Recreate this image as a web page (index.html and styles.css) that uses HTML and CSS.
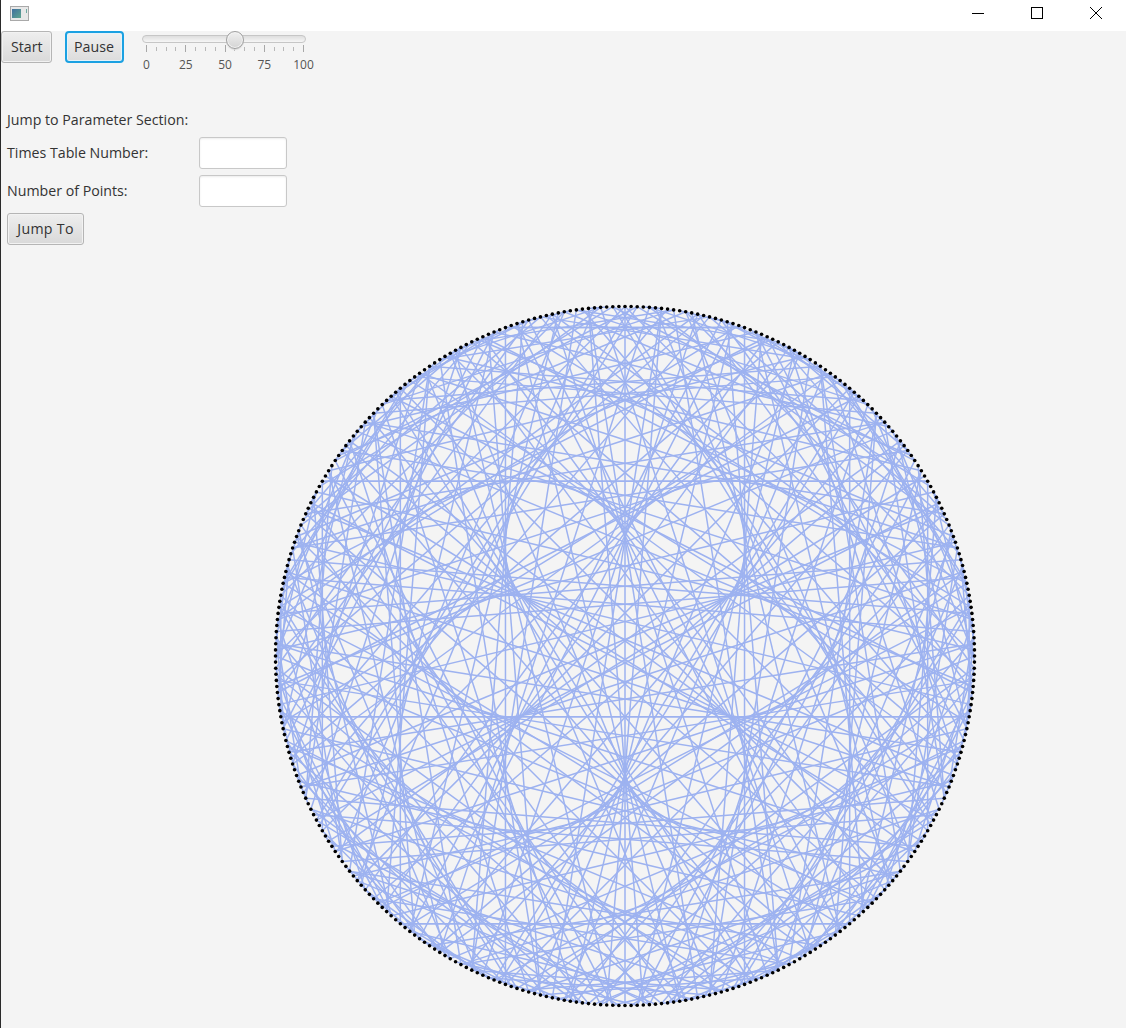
FILE: index.html
```html
<!DOCTYPE html>
<html lang="en">
<head>
  <meta charset="UTF-8" />
  <title>Times Table</title>
  <link rel="stylesheet" href="styles.css">
</head>
<body>
  <div class="title-bar">
    <svg class="app-icon" width="20" height="15" viewBox="0 0 20 15">
      <defs>
        <linearGradient id="iconFill" x1="0" y1="0" x2="1" y2="1">
          <stop offset="0" stop-color="#3f6f9f" />
          <stop offset="1" stop-color="#5fa68f" />
        </linearGradient>
      </defs>
      <rect x="0.5" y="0.5" width="18" height="14" fill="#e8e8e8" stroke="#a9a9a9" />
      <rect x="2" y="3" width="9" height="9" fill="url(#iconFill)" />
      <rect x="16" y="3" width="1" height="4" fill="#6fa8a0" />
    </svg>
    <div class="window-buttons">
      <svg width="14" height="14" viewBox="0 0 14 14"><path d="M1 7.5H13" stroke="#000" fill="none" /></svg>
      <svg width="14" height="14" viewBox="0 0 14 14"><rect x="1.5" y="1.5" width="11" height="11" stroke="#000" fill="none" /></svg>
      <svg width="14" height="14" viewBox="0 0 14 14"><path d="M1 1L13 13M13 1L1 13" stroke="#000" fill="none" /></svg>
    </div>
  </div>

  <div class="content">
    <div class="controls">
      <button class="btn">Start</button>
      <button class="btn focused">Pause</button>
      <div class="slider">
        <div class="track"><div class="thumb"></div></div>
        <div class="ticks" id="ticks"></div>
        <div class="tick-labels">
          <span>0</span><span>25</span><span>50</span><span>75</span><span>100</span>
        </div>
      </div>
    </div>

    <div class="jump-form">
      <div class="form-title">Jump to Parameter Section:</div>
      <div class="form-row">
        <label>Times Table Number:</label>
        <input type="text" />
      </div>
      <div class="form-row">
        <label>Number of Points:</label>
        <input type="text" />
      </div>
      <button class="btn">Jump To</button>
    </div>

    <canvas id="board" width="710" height="710"></canvas>
  </div>

  <script src="script.js"></script>
</body>
</html>
```

FILE: styles.css
```css
* {
  box-sizing: border-box;
}

html, body {
  height: 100%;
}

body {
  margin: 0;
  overflow: hidden;
  display: flex;
  flex-direction: column;
  border-left: 1px solid #2a2a2a;
  background-color: #f4f4f4;
  color: #333;
  font-family: "Open Sans", "Noto Sans", sans-serif;
  font-size: 14.2px;
}

.title-bar {
  flex: none;
  height: 31px;
  display: flex;
  justify-content: space-between;
  align-items: center;
  padding: 0 23px 5px 9px;
  background-color: #fff;
}

.window-buttons {
  display: flex;
  gap: 45px;
}

.content {
  flex: 1;
  min-height: 0;
}

.controls {
  display: flex;
  align-items: flex-start;
  height: 74px;
}

.btn {
  height: 32px;
  padding: 0 9px 1px;
  border: 1px solid #b5b5b5;
  border-radius: 3px;
  background: linear-gradient(#eeeeee, #d9d9d9);
  box-shadow: inset 0 0 0 1px #f2f2f2;
  color: #333;
  font: inherit;
}

.controls .btn:first-child {
  width: 51px;
}

.controls .focused {
  width: 59px;
  margin-left: 13px;
  padding: 0 8px 1px 7px;
  border: 2px solid #1ba1e2;
  border-radius: 4px;
  background: linear-gradient(#f0f0f0, #dcdcdc);
  box-shadow: inset 0 0 0 1px #e4f3fa;
}

.slider {
  width: 176px;
  margin-left: 14px;
  padding-top: 4px;
}

.track {
  position: relative;
  width: 164px;
  height: 8px;
  margin-left: 4px;
  border: 1px solid #c6c6c6;
  border-radius: 4px;
  background: linear-gradient(#dedede, #f6f6f6);
}

.thumb {
  position: absolute;
  left: 83px;
  top: -5px;
  width: 18px;
  height: 18px;
  border: 1px solid #a0a0a0;
  border-radius: 50%;
  background: linear-gradient(#f0f0f0, #d4d4d4);
  box-shadow: inset 0 0 0 1px #f4f4f4, 0 1px 1px #d8d8d8;
}

.ticks {
  display: flex;
  justify-content: space-between;
  align-items: flex-start;
  width: 158px;
  height: 7px;
  margin: 2px 0 0 8px;
}

.ticks i {
  width: 1px;
  height: 4px;
  margin-top: 2px;
  background-color: #b8b8b8;
}

.ticks i.major {
  height: 7px;
  margin-top: 0;
  background-color: #a8a8a8;
}

.tick-labels {
  display: flex;
  justify-content: space-between;
  width: 158px;
  margin: 5px 0 0 8px;
  font-size: 12px;
  line-height: 16px;
  color: #555;
}

.tick-labels span {
  display: flex;
  justify-content: center;
  width: 1px;
}

.jump-form {
  display: flex;
  flex-direction: column;
  align-items: flex-start;
  padding-left: 6px;
}

.form-title {
  height: 32px;
  line-height: 30px;
}

.form-row {
  display: flex;
  align-items: center;
  height: 32px;
  margin-bottom: 6px;
}

.form-row label {
  width: 192px;
  margin-top: -2px;
}

.form-row input {
  width: 88px;
  height: 32px;
  border: 1px solid #c8c8c8;
  border-radius: 3px;
  background-color: #fff;
  box-shadow: inset 0 1px 2px #ececec;
}

.jump-form .btn {
  width: 77px;
  letter-spacing: 0.3px;
}

#board {
  display: block;
  margin: 56px 0 0 269px;
}
```

FILE: script.js
```js
const canvas = document.getElementById('board');
const ctx = canvas.getContext('2d');

const points = 360;
const table = 62;
const radius = 349.5;
const cx = 355;
const cy = 355;

function pointAt(i) {
  const angle = (i / points) * Math.PI * 2 + Math.PI / 2;
  return [cx + radius * Math.cos(angle), cy + radius * Math.sin(angle)];
}

ctx.strokeStyle = '#9db2f0';
ctx.lineWidth = 1.5;
for (let i = 0; i < points; i++) {
  const from = pointAt(i);
  const to = pointAt((i * table) % points);
  ctx.beginPath();
  ctx.moveTo(from[0], from[1]);
  ctx.lineTo(to[0], to[1]);
  ctx.stroke();
}

ctx.fillStyle = '#000';
for (let i = 0; i < points; i++) {
  const p = pointAt(i);
  ctx.beginPath();
  ctx.arc(p[0], p[1], 1.8, 0, Math.PI * 2);
  ctx.fill();
}

const ticks = document.getElementById('ticks');
for (let i = 0; i <= 16; i++) {
  const tick = document.createElement('i');
  if (i % 4 === 0) tick.className = 'major';
  ticks.appendChild(tick);
}
```
